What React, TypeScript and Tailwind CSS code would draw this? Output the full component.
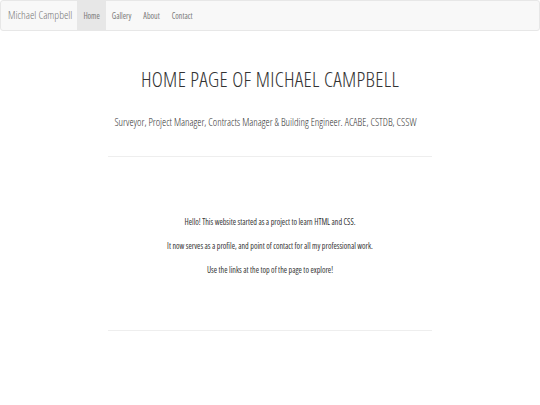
export default function App() {
  const links = ['Home', 'Gallery', 'About', 'Contact'];
  return (
    <div className="min-h-[405px] bg-white font-['Open_Sans',sans-serif] font-light text-[#333]">
      <nav className="flex h-[31px] items-stretch rounded-[3px] border border-[#e7e7e7] bg-[#f8f8f8]">
        <a className="flex items-center pl-[7px] pr-[5px] text-[11px] font-light text-[#777] [font-stretch:75%]">Michael Campbell</a>
        <ul className="flex items-stretch">
          {links.map((l, i) => (
            <li key={l} className={`flex items-center px-[6px] text-[8px] font-normal text-[#777] [font-stretch:75%] ${i === 0 ? 'bg-[#e7e7e7] text-[#555]' : ''}`}>
              {l}
            </li>
          ))}
        </ul>
      </nav>

      <div className="mx-auto w-[324px]">
        <h1 className="mt-[36px] text-center text-[21px] leading-[24px] tracking-[0.3px] [font-stretch:75%]">HOME PAGE OF MICHAEL CAMPBELL</h1>
        <p className="mt-[24px] whitespace-nowrap pr-[9px] text-center text-[10.5px] font-light leading-[14px] [font-stretch:75%]">
          Surveyor, Project Manager, Contracts Manager &amp; Building Engineer. ACABE, CSTDB, CSSW
        </p>
        <hr className="mt-[27px] border-[#eee]" />
        <div className="pt-[60px] pb-[55px] text-center text-[8px] font-normal leading-[10px] [font-stretch:75%]">
          <p>Hello! This website started as a project to learn HTML and CSS.</p>
          <p className="mt-[14px]">It now serves as a profile, and point of contact for all my professional work.</p>
          <p className="mt-[14px]">Use the links at the top of the page to explore!</p>
        </div>
        <hr className="border-[#eee]" />
      </div>
    </div>
  );
}
